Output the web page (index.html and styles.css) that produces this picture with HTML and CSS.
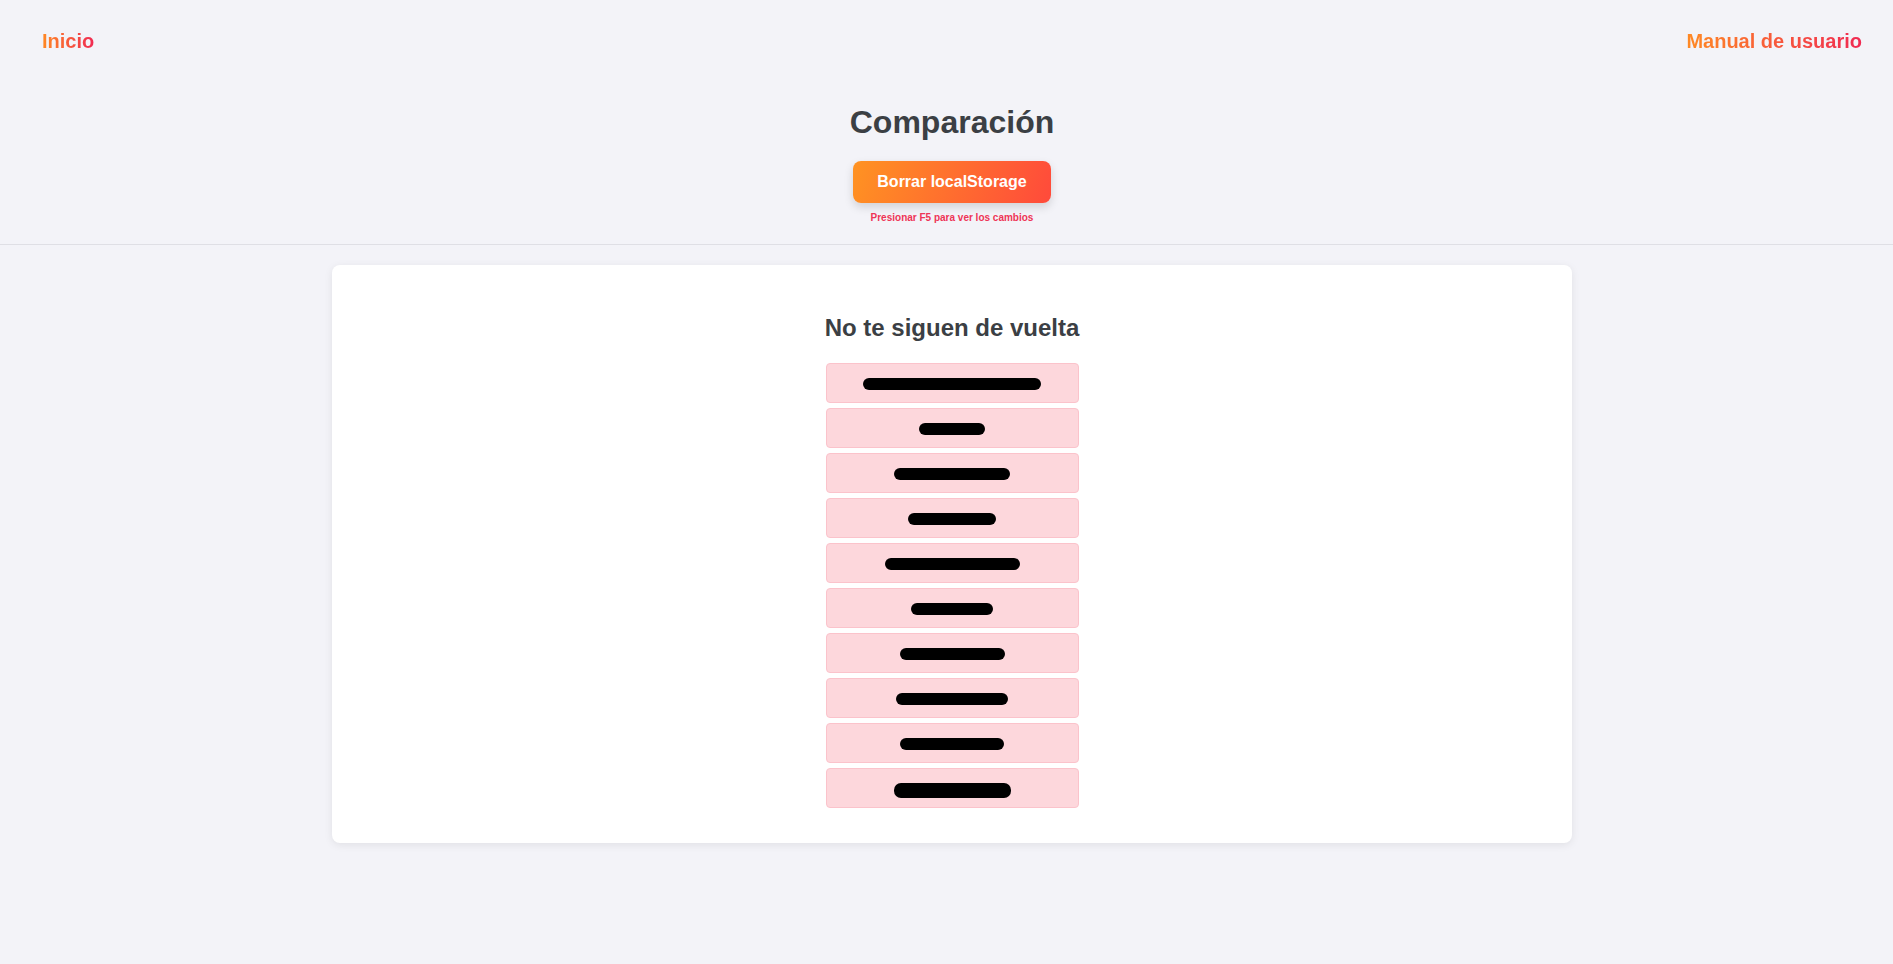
FILE: index.html
```html
<!DOCTYPE html>
<html lang="es">
<head>
<meta charset="utf-8">
<title>Comparación</title>
<link rel="stylesheet" href="styles.css">
</head>
<body>
<div class="page">
  <header class="header">
    <nav class="nav">
      <a class="nav-link" href="#">Inicio</a>
      <a class="nav-link" href="#">Manual de usuario</a>
    </nav>
    <div class="hero">
      <h1 class="title">Comparación</h1>
      <button class="btn" type="button">Borrar localStorage</button>
      <p class="hint">Presionar F5 para ver los cambios</p>
    </div>
  </header>
  <main class="main">
    <section class="card">
      <h2 class="card-title">No te siguen de vuelta</h2>
      <ul class="list">
        <li class="item"><span class="redact" style="width:178px"></span></li>
        <li class="item"><span class="redact" style="width:66px"></span></li>
        <li class="item"><span class="redact" style="width:116px"></span></li>
        <li class="item"><span class="redact" style="width:88px"></span></li>
        <li class="item"><span class="redact" style="width:135px"></span></li>
        <li class="item"><span class="redact" style="width:82px"></span></li>
        <li class="item"><span class="redact" style="width:105px"></span></li>
        <li class="item"><span class="redact" style="width:112px"></span></li>
        <li class="item"><span class="redact" style="width:104px"></span></li>
        <li class="item"><span class="redact redact-tall" style="width:117px"></span></li>
      </ul>
    </section>
  </main>
</div>
</body>
</html>
```

FILE: styles.css
```css
html, body {
  margin: 0;
  padding: 0;
  overflow-x: hidden;
}

body {
  background: #f3f3f8;
  font-family: "Liberation Sans", Arial, sans-serif;
  color: #3b3f44;
}

.page {
  width: 1904px;
}

.header {
  padding-top: 30px;
  padding-bottom: 20px;
  border-bottom: 1px solid #dfdfe5;
}

.nav {
  display: flex;
  justify-content: space-between;
  padding: 0 42px;
}

.nav-link {
  font-size: 20px;
  line-height: 23px;
  font-weight: bold;
  text-decoration: none;
  background: linear-gradient(90deg, #ff8a24, #f02a52);
  -webkit-background-clip: text;
  background-clip: text;
  color: transparent;
}

.hero {
  margin-top: 51px;
  display: flex;
  flex-direction: column;
  align-items: center;
}

.title {
  margin: 0;
  font-size: 32px;
  line-height: 37px;
  font-weight: bold;
  color: #3b3f44;
}

.btn {
  margin-top: 20px;
  height: 42px;
  padding: 0 24px;
  border: none;
  border-radius: 8px;
  background: linear-gradient(110deg, #ff9322, #ff4a3b);
  color: #ffffff;
  font-family: "Liberation Sans", Arial, sans-serif;
  font-size: 16px;
  font-weight: bold;
  box-shadow: 0 4px 10px rgba(0, 0, 0, 0.14);
  cursor: pointer;
}

.hint {
  margin: 9px 0 0;
  font-size: 10px;
  line-height: 12px;
  font-weight: bold;
  color: #ee3556;
}

.main {
  padding: 20px 0 40px;
}

.card {
  width: 1240px;
  margin: 0 auto;
  box-sizing: border-box;
  padding: 49px 0 35px;
  background: #ffffff;
  border-radius: 8px;
  box-shadow: 0 2px 8px rgba(0, 0, 0, 0.08);
  display: flex;
  flex-direction: column;
  align-items: center;
}

.card-title {
  margin: 0;
  font-size: 24px;
  line-height: 28px;
  font-weight: bold;
  color: #3b3f44;
}

.list {
  list-style: none;
  margin: 21px 0 0;
  padding: 0;
  display: flex;
  flex-direction: column;
  gap: 5px;
}

.item {
  width: 253px;
  height: 40px;
  box-sizing: border-box;
  background: #fdd7dc;
  border: 1px solid #fbc3cb;
  border-radius: 4px;
  display: flex;
  align-items: center;
  justify-content: center;
  font-size: 16px;
  color: #721c24;
}

.redact {
  display: block;
  height: 12px;
  margin-top: 2px;
  background: #000000;
  border-radius: 7px;
}

.redact-tall {
  height: 15px;
  margin-top: 4px;
}
```
